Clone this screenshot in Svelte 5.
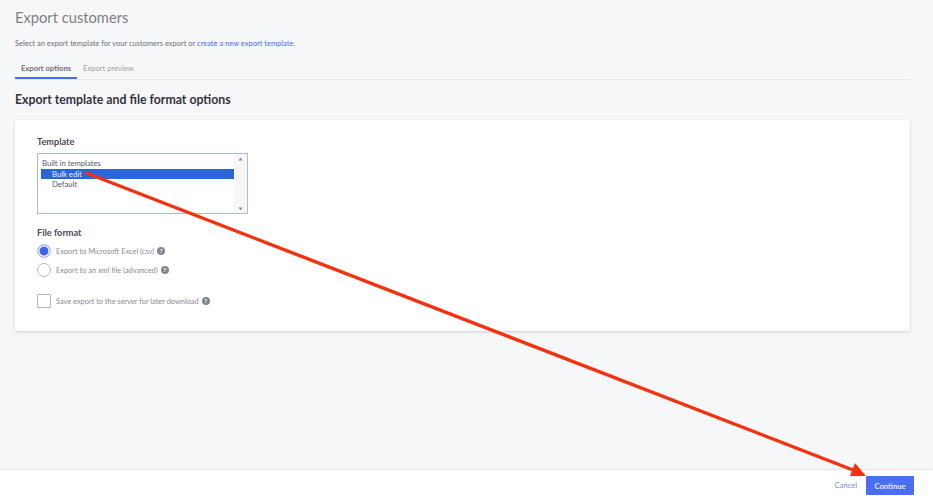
<script>
  let formats = [
    { label: "Export to Microsoft Excel (csv)", checked: true },
    { label: "Export to an xml file (advanced)", checked: false }
  ];
</script>

<div class="page">
  <main class="content">
    <h1>Export customers</h1>
    <p class="intro">Select an export template for your customers export or <a href="#new">create a new export template</a>.</p>
    <div class="tabs">
      <span class="tab active">Export options</span>
      <span class="tab">Export preview</span>
    </div>
    <h2>Export template and file format options</h2>

    <section class="card">
      <h3>Template</h3>
      <div class="listbox">
        <div class="options">
          <div class="group">Built in templates</div>
          <div class="option selected">Bulk edit</div>
          <div class="option">Default</div>
        </div>
        <div class="scroll">
          <svg width="5" height="4" viewBox="0 0 5 4"><path d="M2.5 0.5 L4.5 3.5 H0.5 Z" fill="#8a8a8a" /></svg>
          <svg width="5" height="4" viewBox="0 0 5 4"><path d="M2.5 3.5 L4.5 0.5 H0.5 Z" fill="#8a8a8a" /></svg>
        </div>
      </div>

      <h3 class="format-title">File format</h3>
      <div class="radios">
        {#each formats as f}
          <div class="check-row">
            <span class="radio" class:on={f.checked}></span>
            <span class="label">{f.label}</span>
            <span class="help">?</span>
          </div>
        {/each}
      </div>
      <div class="check-row save">
        <span class="box"></span>
        <span class="label">Save export to the server for later download</span>
        <span class="help">?</span>
      </div>
    </section>
  </main>

  <footer>
    <a class="cancel" href="#cancel">Cancel</a>
    <button>Continue</button>
  </footer>

  <svg class="arrow" width="933" height="500" viewBox="0 0 933 500">
    <path d="M85 172.5 L853 470" stroke="#f5320f" stroke-width="3.4" fill="none" />
    <path d="M866 476 L850 476 L855 463 Z" fill="#f5320f" />
  </svg>
</div>

<style>
  :global(body) {
    margin: 0;
    font-family: Lato, "Noto Sans", sans-serif;
  }
  .page {
    position: relative;
    width: 933px;
    height: 500px;
    background: #f6f7f9;
    display: flex;
    flex-direction: column;
    overflow: hidden;
  }
  .content {
    flex: 1;
    padding: 7px 23px 0 15px;
    min-height: 0;
  }
  h1 {
    margin: 0;
    font-size: 14.7px;
    line-height: 20px;
    font-weight: 400;
    color: #7d8089;
  }
  .intro {
    margin: 10px 0 0;
    font-size: 7.5px;
    line-height: 14px;
    color: #6d7079;
  }
  .intro a {
    color: #4a6df0;
    text-decoration: none;
  }
  .tabs {
    display: flex;
    margin-top: 5px;
    border-bottom: 1px solid #e8e9ee;
    height: 23px;
  }
  .tab {
    padding: 6px 6px 0 6px;
    font-size: 7.6px;
    line-height: 12px;
    color: #9c9fa8;
  }
  .tab.active {
    font-weight: 700;
    color: #6d7079;
    box-shadow: inset 0 -2px 0 #3f6bf5;
    height: 23px;
    box-sizing: border-box;
  }
  h2 {
    margin: 11px 0 0;
    font-size: 12.3px;
    line-height: 18px;
    font-weight: 700;
    color: #313440;
  }
  .card {
    margin-top: 11px;
    height: 211px;
    box-sizing: border-box;
    padding: 15px 22px;
    background: #fff;
    border-radius: 2px;
    box-shadow: 0 1px 3px rgba(40, 45, 70, 0.2);
  }
  h3 {
    margin: 0;
    font-size: 9.2px;
    line-height: 14px;
    font-weight: 700;
    color: #4a4c57;
  }
  .listbox {
    display: flex;
    margin-top: 4px;
    width: 211px;
    height: 61px;
    box-sizing: border-box;
    border: 1px solid #a9b7ef;
    font-size: 7.7px;
    line-height: 10.5px;
    color: #55575f;
  }
  .options {
    flex: 1;
    padding: 4px 0 0 3px;
  }
  .group {
    padding-left: 1px;
  }
  .option {
    padding-left: 11px;
  }
  .option.selected {
    background: #2b66d6;
    color: #e8eeff;
  }
  .scroll {
    width: 13px;
    padding: 3px 0 2px;
    background: #f7f7f8;
    display: flex;
    flex-direction: column;
    justify-content: space-between;
    align-items: center;
    box-sizing: border-box;
  }
  .format-title {
    margin-top: 12px;
  }
  .radios {
    display: flex;
    flex-direction: column;
    gap: 5px;
    margin-top: 4px;
  }
  .check-row {
    display: flex;
    align-items: center;
    height: 14px;
    font-size: 7.4px;
    color: #888a93;
  }
  .radio {
    width: 12px;
    height: 12px;
    border: 1px solid #b4b6bd;
    border-radius: 50%;
    margin-right: 5px;
    flex: none;
    background: #fff;
  }
  .radio.on {
    background: #3f63f2;
    border-color: #b8c5f5;
    box-shadow: inset 0 0 0 1.5px #fff;
  }
  .box {
    width: 12px;
    height: 12px;
    border: 1px solid #b4b6bd;
    border-radius: 1px;
    margin-right: 5px;
    flex: none;
  }
  .help {
    width: 8px;
    height: 8px;
    margin-left: 3px;
    border-radius: 50%;
    background: #84868f;
    color: #fff;
    font-size: 6px;
    font-weight: 700;
    line-height: 8px;
    text-align: center;
  }
  .save {
    margin-top: 17px;
  }
  footer {
    height: 31px;
    flex: none;
    box-sizing: border-box;
    padding: 6px 19px 0 0;
    background: #fff;
    border-top: 1px solid #e3e4e9;
    display: flex;
    justify-content: flex-end;
    align-items: flex-start;
    gap: 9px;
  }
  .cancel {
    font-size: 7.6px;
    line-height: 19px;
    color: #6f8cf2;
    text-decoration: none;
  }
  button {
    width: 48px;
    height: 19px;
    padding: 0;
    border: none;
    border-radius: 1px;
    background: #4a6df5;
    color: #e6ebff;
    font: 700 7.6px Lato, sans-serif;
  }
  .arrow {
    position: absolute;
    left: 0;
    top: 0;
    pointer-events: none;
  }
</style>
